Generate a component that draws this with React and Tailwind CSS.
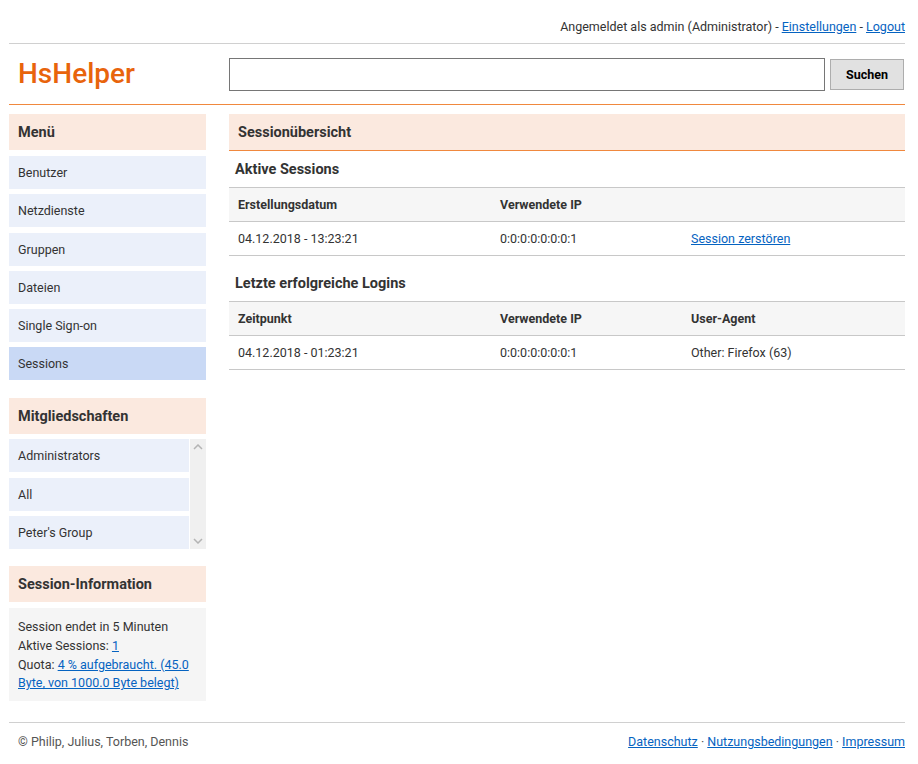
import React from "react";

const menu = ["Benutzer", "Netzdienste", "Gruppen", "Dateien", "Single Sign-on", "Sessions"];
const groups = ["Administrators", "All", "Peter's Group"];

function BoxHead({ children }) {
  return (
    <div className="h-[36px] flex items-center px-[9px] pt-[2px] bg-[#fbe9df] text-[14.5px] font-bold text-[#333]">
      {children}
    </div>
  );
}

function Link({ children }) {
  return <a href="#" className="text-[#0563c1] underline">{children}</a>;
}

function Chevron({ up }) {
  return (
    <svg width="10" height="6" viewBox="0 0 10 6" className="mx-auto">
      <path
        d={up ? "M1 5 L5 1 L9 5" : "M1 1 L5 5 L9 1"}
        fill="none"
        stroke="#b4b4b4"
        strokeWidth="1.5"
      />
    </svg>
  );
}

function Row({ head, cells }) {
  return (
    <div
      className={`grid grid-cols-[262px_191px_1fr] h-[34px] items-center pt-[2px] border-b border-[#c8c8c8] ${
        head ? "bg-[#f6f6f6] font-bold" : ""
      }`}
    >
      {cells.map((c, i) => (
        <div key={i} className="px-[9px]">
          {c}
        </div>
      ))}
    </div>
  );
}

export default function App() {
  return (
    <div className="font-['Roboto',sans-serif] text-[12.5px] text-[#333] bg-white min-h-[764px]">
      <div className="w-[896px] ml-[9px]">
        {/* top bar */}
        <div className="pt-[19px] pb-[8px] leading-[16px] text-right border-b border-[#d0d0d0]">
          Angemeldet als admin (Administrator) - <Link>Einstellungen</Link> - <Link>Logout</Link>
        </div>

        {/* logo + search */}
        <div className="h-[61px] flex items-center border-b border-[#f0883e]">
          <div className="w-[220px] pl-[9px] text-[28px] font-medium text-[#e8640c] leading-none">HsHelper</div>
          <input className="w-[596px] h-[33px] border border-[#767676] bg-white outline-none" />
          <button className="ml-[5px] w-[74px] h-[31px] pt-[2px] bg-[#e1e1e1] border border-[#adadad] font-bold text-[12.5px] text-black">
            Suchen
          </button>
        </div>

        {/* body */}
        <div className="flex gap-[23px] mt-[9px]">
          <aside className="w-[197px] flex flex-col">
            <BoxHead>Menü</BoxHead>
            <div className="flex flex-col gap-[5.25px] mt-[6px]">
              {menu.map((m) => (
                <div
                  key={m}
                  className={`h-[33px] flex items-center px-[9px] pt-[2px] ${m === "Sessions" ? "bg-[#c9d9f5]" : "bg-[#ebf0fa]"}`}
                >
                  {m}
                </div>
              ))}
            </div>

            <div className="mt-[18px]">
              <BoxHead>Mitgliedschaften</BoxHead>
            </div>
            <div className="mt-[5px] h-[110px] flex gap-[1px]">
              <div className="flex-1 flex flex-col gap-[5.5px]">
                {groups.map((g) => (
                  <div key={g} className="h-[33px] flex items-center px-[9px] pt-[2px] bg-[#ebf0fa]">
                    {g}
                  </div>
                ))}
              </div>
              <div className="w-[16px] bg-[#f0f0f0] flex flex-col justify-between py-[5px]">
                <Chevron up />
                <Chevron />
              </div>
            </div>

            <div className="mt-[17px]">
              <BoxHead>Session-Information</BoxHead>
            </div>
            <div className="mt-[6px] bg-[#f5f5f5] px-[9px] pt-[10px] pb-[8px] leading-[18.7px]">
              <div>Session endet in 5 Minuten</div>
              <div>
                Aktive Sessions: <Link>1</Link>
              </div>
              <div>
                Quota: <Link>4 % aufgebraucht. (45.0 Byte, von 1000.0 Byte belegt)</Link>
              </div>
            </div>
          </aside>

          <main className="flex-1">
            <div className="h-[37px] flex items-center px-[9px] pt-[2px] bg-[#fbe9df] text-[14.5px] font-bold border-b border-[#f0883e]">
              Sessionübersicht
            </div>

            <h2 className="pt-[10px] pb-[8px] px-[6px] text-[14.5px] leading-[18px] font-bold">Aktive Sessions</h2>
            <div className="border-t border-[#c8c8c8]">
              <Row head cells={["Erstellungsdatum", "Verwendete IP", ""]} />
              <Row cells={["04.12.2018 - 13:23:21", "0:0:0:0:0:0:0:1", <Link>Session zerstören</Link>]} />
            </div>

            <h2 className="pt-[19px] pb-[8px] px-[6px] text-[14.5px] leading-[18px] font-bold">Letzte erfolgreiche Logins</h2>
            <div className="border-t border-[#c8c8c8]">
              <Row head cells={["Zeitpunkt", "Verwendete IP", "User-Agent"]} />
              <Row cells={["04.12.2018 - 01:23:21", "0:0:0:0:0:0:0:1", "Other: Firefox (63)"]} />
            </div>
          </main>
        </div>

        {/* footer */}
        <div className="mt-[21px] border-t border-[#d0d0d0] pt-[11px] leading-[16px] flex justify-between">
          <div className="pl-[9px] text-[#555]">© Philip, Julius, Torben, Dennis</div>
          <div className="text-[#555]">
            <Link>Datenschutz</Link> · <Link>Nutzungsbedingungen</Link> · <Link>Impressum</Link>
          </div>
        </div>
      </div>
    </div>
  );
}
